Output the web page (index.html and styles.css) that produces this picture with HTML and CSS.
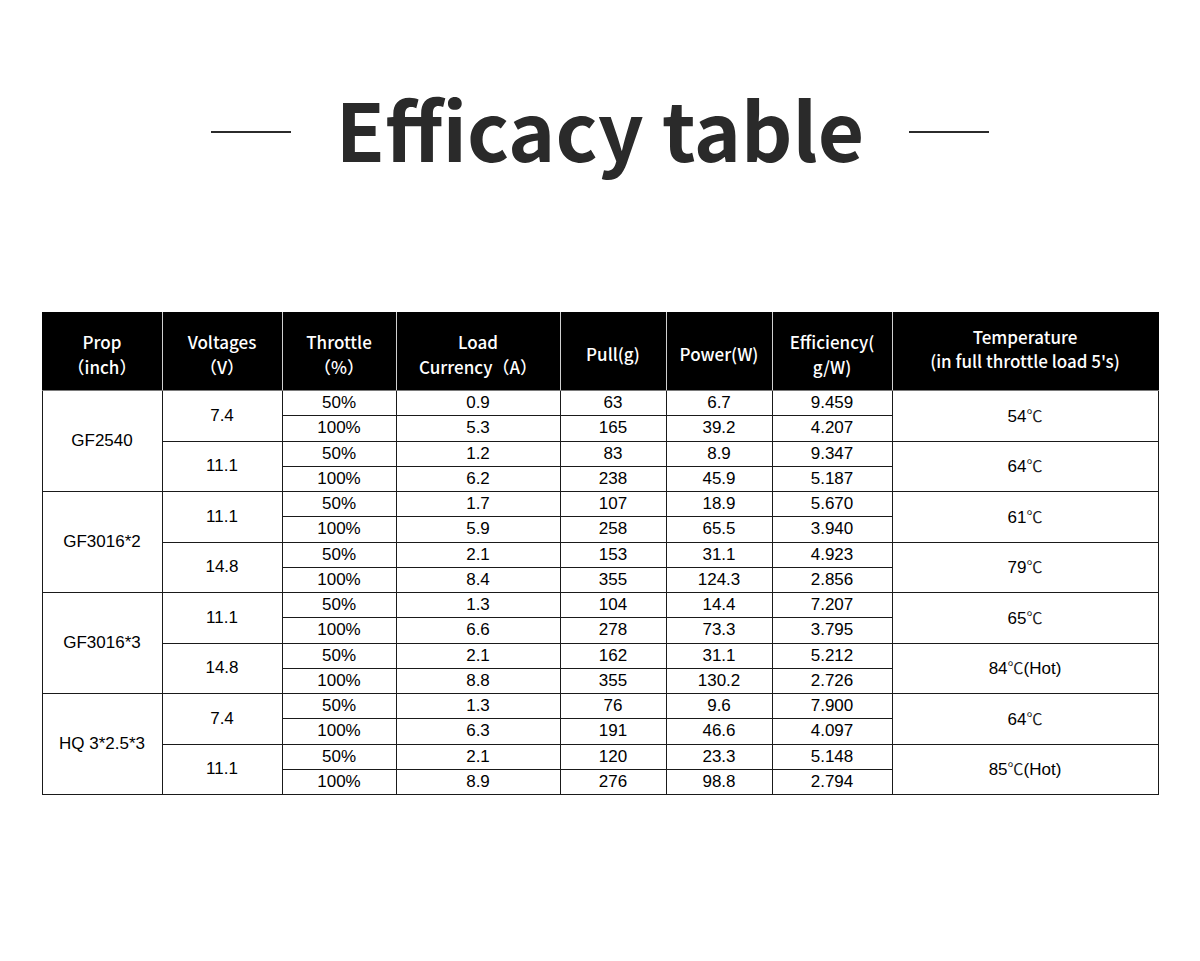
FILE: index.html
```html
<!DOCTYPE html>
<html>
<head>
<meta charset="utf-8">
<link rel="stylesheet" href="styles.css">
</head>
<body>
<div class="page">
  <header class="title-row">
    <span class="rule"></span>
    <h1 class="title">Efficacy table</h1>
    <span class="rule"></span>
  </header>
  <table class="eff">
    <colgroup>
      <col class="c1"><col class="c2"><col class="c3"><col class="c4"><col class="c5"><col class="c6"><col class="c7"><col class="c8">
    </colgroup>
    <thead>
      <tr>
        <th>Prop<br>（inch）</th>
        <th>Voltages<br>（V）</th>
        <th>Throttle<br>（%）</th>
        <th>Load<br>Currency（A）</th>
        <th>Pull(g)</th>
        <th>Power(W)</th>
        <th>Efficiency(<br>g/W)</th>
        <th class="temp">Temperature<br>(in full throttle load 5's)</th>
      </tr>
    </thead>
    <tbody>
      <tr><td rowspan="4">GF2540</td><td rowspan="2">7.4</td><td>50%</td><td>0.9</td><td>63</td><td>6.7</td><td>9.459</td><td rowspan="2">54<span class="deg">℃</span></td></tr>
      <tr><td>100%</td><td>5.3</td><td>165</td><td>39.2</td><td>4.207</td></tr>
      <tr><td rowspan="2">11.1</td><td>50%</td><td>1.2</td><td>83</td><td>8.9</td><td>9.347</td><td rowspan="2">64<span class="deg">℃</span></td></tr>
      <tr><td>100%</td><td>6.2</td><td>238</td><td>45.9</td><td>5.187</td></tr>

      <tr><td rowspan="4">GF3016*2</td><td rowspan="2">11.1</td><td>50%</td><td>1.7</td><td>107</td><td>18.9</td><td>5.670</td><td rowspan="2">61<span class="deg">℃</span></td></tr>
      <tr><td>100%</td><td>5.9</td><td>258</td><td>65.5</td><td>3.940</td></tr>
      <tr><td rowspan="2">14.8</td><td>50%</td><td>2.1</td><td>153</td><td>31.1</td><td>4.923</td><td rowspan="2">79<span class="deg">℃</span></td></tr>
      <tr><td>100%</td><td>8.4</td><td>355</td><td>124.3</td><td>2.856</td></tr>

      <tr><td rowspan="4">GF3016*3</td><td rowspan="2">11.1</td><td>50%</td><td>1.3</td><td>104</td><td>14.4</td><td>7.207</td><td rowspan="2">65<span class="deg">℃</span></td></tr>
      <tr><td>100%</td><td>6.6</td><td>278</td><td>73.3</td><td>3.795</td></tr>
      <tr><td rowspan="2">14.8</td><td>50%</td><td>2.1</td><td>162</td><td>31.1</td><td>5.212</td><td rowspan="2">84<span class="deg">℃</span>(Hot)</td></tr>
      <tr><td>100%</td><td>8.8</td><td>355</td><td>130.2</td><td>2.726</td></tr>

      <tr><td rowspan="4">HQ 3*2.5*3</td><td rowspan="2">7.4</td><td>50%</td><td>1.3</td><td>76</td><td>9.6</td><td>7.900</td><td rowspan="2">64<span class="deg">℃</span></td></tr>
      <tr><td>100%</td><td>6.3</td><td>191</td><td>46.6</td><td>4.097</td></tr>
      <tr><td rowspan="2">11.1</td><td>50%</td><td>2.1</td><td>120</td><td>23.3</td><td>5.148</td><td rowspan="2">85<span class="deg">℃</span>(Hot)</td></tr>
      <tr><td>100%</td><td>8.9</td><td>276</td><td>98.8</td><td>2.794</td></tr>
    </tbody>
  </table>
</div>
</body>
</html>
```
FILE: styles.css
```css
html, body {
  margin: 0;
  padding: 0;
  background: #fff;
}
.page {
  width: 1200px;
  height: 961px;
  display: flex;
  flex-direction: column;
  align-items: center;
}
.title-row {
  display: flex;
  align-items: center;
  gap: 45px;
  margin-top: 77px;
  height: 100px;
}
.rule {
  display: block;
  width: 80px;
  height: 2px;
  background: #2b2b2b;
  margin-top: 10px;
}
.title {
  margin: 0;
  font-family: "Noto Sans CJK SC", "Noto Sans", sans-serif;
  font-weight: 700;
  font-size: 80px;
  line-height: 100px;
  color: #2a2a2a;
}
.eff {
  margin-top: 135px;
  width: 1116px;
  border-collapse: collapse;
  table-layout: fixed;
  font-family: "Liberation Sans", Arial, sans-serif;
  font-size: 17px;
  color: #000;
}
.c1 { width: 120px; }
.c2 { width: 120px; }
.c3 { width: 114px; }
.c4 { width: 164px; }
.c5 { width: 106px; }
.c6 { width: 106px; }
.c7 { width: 120px; }
.c8 { width: 266px; }
.eff th {
  background: #000;
  color: #fff;
  font-family: "Noto Sans CJK SC", "Noto Sans", sans-serif;
  font-weight: 500;
  font-size: 17px;
  line-height: 25px;
  height: 73px;
  padding: 4px 0 0;
  border: 1px solid #000;
  border-left-color: #d0d0d0;
  border-right-color: #d0d0d0;
  border-bottom-color: #7a7a7a;
  text-align: center;
  vertical-align: middle;
}
.eff th:first-child { border-left-color: #000; }
.eff th:last-child { border-right-color: #000; }
.eff th.temp {
  line-height: 24px;
  height: 69px;
  padding: 1px 0 7px;
}
.eff td {
  border: 1px solid #1a1a1a;
  height: 24.25px;
  padding: 0;
  line-height: 24px;
  text-align: center;
  vertical-align: middle;
}
.deg {
  font-family: "Noto Sans CJK SC", sans-serif;
  font-weight: 400;
  font-size: 16px;
  color: #222;
}
```
